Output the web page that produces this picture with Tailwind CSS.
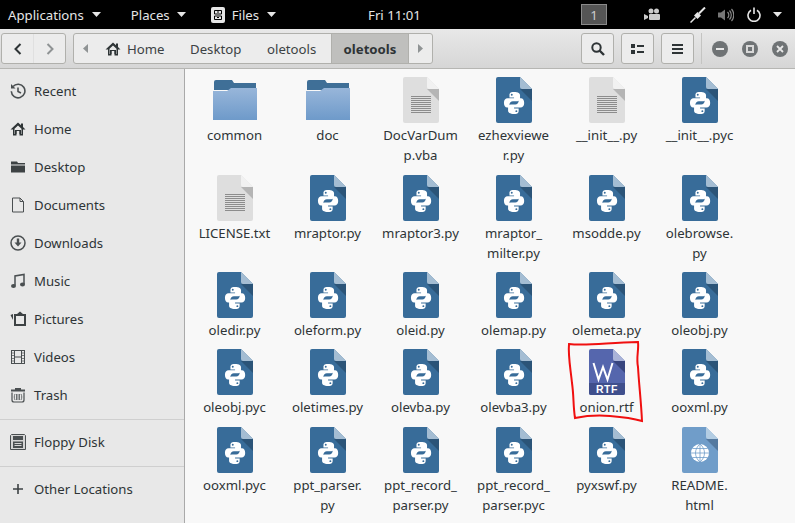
<!DOCTYPE html>
<html lang="en">
<head>
    <meta charset="UTF-8">
    <title>oletools - Files</title>
    <script src="https://cdn.jsdelivr.net/npm/@tailwindcss/browser@4"></script>
</head>
<body class="w-[795px] h-[523px] overflow-hidden bg-[#f8f8f8] text-[#2e3436] font-['Noto_Sans',sans-serif] text-[13.2px] leading-[20px]">
    <!-- shared icons -->
    <svg class="absolute w-0 h-0">
        <defs>
            <linearGradient id="folderfront" x1="0" y1="0" x2="0" y2="1"><stop offset="0" stop-color="#98b6da"/><stop offset="1" stop-color="#6e9aca"/></linearGradient>
        </defs>
        <symbol id="py" viewBox="0 0 36 46">
            <path d="M2 0H24L36 12V44a2 2 0 0 1-2 2H2a2 2 0 0 1-2-2V2A2 2 0 0 1 2 0Z" fill="#386c99"/>
            <path d="M24 0L36 12H26a2 2 0 0 1-2-2Z" fill="#a4bdd3"/>
            <path d="M24 12H36V24Z" fill="#2b5478"/>
            <g transform="translate(1.500 2) scale(.92)">
                <path d="M17.600 14c-4 0-4.600 1.700-4.600 3.500V20h5v1H11c-2.400 0-4 1.800-4 4.900 0 3.200 1.400 5.100 3.600 5.100H13v-3c0-2 1.700-3.700 3.700-3.700h4.800c1.700 0 3-1.400 3-3v-3.800c0-1.700-1.500-3.500-6.900-3.500Zm-2.100 2a1 1 0 1 1 0 2.100 1 1 0 0 1 0-2.100Z" fill="#fff"/>
                <path d="M18.400 38c4 0 4.600-1.700 4.600-3.500V32h-5v-1h7c2.400 0 4-1.800 4-4.900 0-3.200-1.400-5.100-3.600-5.100H23v3c0 2-1.700 3.700-3.700 3.700h-4.800c-1.700 0-3 1.400-3 3v3.800c0 1.700 1.500 3.500 6.900 3.500Zm2.100-2a1 1 0 1 1 0-2.100 1 1 0 0 1 0 2.100Z" fill="#fff"/>
            </g>
        </symbol>
        <symbol id="folder" viewBox="0 0 44 40">
            <path d="M1 2a2 2 0 0 1 2-2H19l2 3H43V10H1Z" fill="#3f6f97"/>
            <path d="M0 11H14l4-3H44V40H0Z" fill="url(#folderfront)"/>
        </symbol>
        <symbol id="txt" viewBox="0 0 36 46">
            <path d="M2 0H24L36 12V44a2 2 0 0 1-2 2H2a2 2 0 0 1-2-2V2A2 2 0 0 1 2 0Z" fill="#dedede"/>
            <path d="M24 0L36 12H26a2 2 0 0 1-2-2Z" fill="#f1f1f1"/>
            <path d="M24 12H36V24Z" fill="#b5b5b5"/>
            <path d="M8 19.500H28M8 21.500H28M8 23.500H28M8 25.500H28M8 27.500H28M8 29.500H28M8 31.500H28M8 33.500H28M8 35.500H28" stroke="#8c8c8c"/>
        </symbol>
        <symbol id="home" viewBox="0 0 16 16">
            <path d="M8 1.500 0.500 8.500H3V14.500H6.500V10H9.500V14.500H13V8.500H15.500L13 6V2.500H11V4.200Z" fill="#2e3436"/>
            <path d="M8 4.500 4.500 7.800V13H5V9H11V13H11.500V7.800Z" fill="#e8e8e8"/>
            <path d="M5 9H11V13H9.500V10H6.500V13H5Z" fill="#2e3436"/>
        </symbol>
        <symbol id="caret" viewBox="0 0 9 5"><path d="M0 0H9L4.500 5Z" fill="#e6e6e6"/></symbol>
    </svg>

    <!-- top bar -->
    <div class="h-[29px] bg-black text-[#e6e6e6] flex items-center relative">
        <span class="ml-[8px]">Applications</span>
        <svg class="w-[9px] h-[5px] ml-[8px]"><use href="#caret"/></svg>
        <span class="ml-[30px]">Places</span>
        <svg class="w-[9px] h-[5px] ml-[7px]"><use href="#caret"/></svg>
        <svg class="w-[14px] h-[16px] ml-[25px]" viewBox="0 0 14 16"><rect width="14" height="16" rx="2" fill="#e6e6e6"/><path d="M3.500 3.500h7v3.500h-7zM3.500 9h7v3.500h-7z" fill="none" stroke="#000"/><path d="M6 5h2M6 10.500h2" stroke="#000"/></svg>
        <span class="ml-[7px]">Files</span>
        <svg class="w-[9px] h-[5px] ml-[8px]"><use href="#caret"/></svg>
        <span class="ml-[92px] w-[56px] whitespace-nowrap">Fri 11:01</span>
        <div class="ml-[157px] w-[26px] h-[21px] bg-[#555] border border-[#8a8a8a] flex items-center justify-center text-[#ccc]">1</div>
        <svg class="w-[16px] h-[13px] ml-[37px]" viewBox="0 0 16 13"><circle cx="7" cy="3" r="2.500" fill="#ccc"/><circle cx="12.500" cy="3" r="2.500" fill="#ccc"/><rect x="5" y="6" width="11" height="6" rx="1" fill="#ccc"/><path d="M0 6l4 2v2l-4 2Z" fill="#ccc"/></svg>
        <svg class="w-[16px] h-[16px] ml-[30px]" viewBox="0 0 16 16"><path d="M0.500 15.500 5.500 10.500" stroke="#e6e6e6" stroke-width="1.500"/><path d="M4 8.500 7.500 12 11 8.500 7.500 5Z" fill="#e6e6e6"/><path d="M9 6.500 15 0.500" stroke="#e6e6e6" stroke-width="2"/></svg>
        <svg class="w-[16px] h-[14px] ml-[12px]" viewBox="0 0 16 14"><path d="M0 4.500H3L7 1.500V12.500L3 9.500H0Z" fill="#777"/><path d="M9.500 4a4 4 0 0 1 0 6M11.500 2.500a6.500 6.500 0 0 1 0 9M13.500 1a9 9 0 0 1 0 12" fill="none" stroke="#888" stroke-width="1.200"/></svg>
        <svg class="w-[14px] h-[15px] ml-[13px]" viewBox="0 0 14 15"><path d="M4 3.200a6 6 0 1 0 6 0M7 0.500V7" fill="none" stroke="#e6e6e6" stroke-width="1.600"/></svg>
        <svg class="w-[9px] h-[5px] ml-[12px]"><use href="#caret"/></svg>
    </div>

    <!-- header bar -->
    <div class="h-[40px] bg-gradient-to-b from-[#e8e8e8] to-[#d6d6d6] border-b border-[#b6b6b3] flex items-center pl-[1px]">
        <div class="w-[65px] h-[31px] rounded-[3px] border border-[#b0b0ac] bg-[#ececec] flex">
            <div class="w-[32px] flex items-center justify-center border-r border-[#e0e0e0]">
                <svg class="w-[8px] h-[12px]" viewBox="0 0 8 12"><path d="M6.500 1 1.500 6l5 5" fill="none" stroke="#2e3436" stroke-width="2"/></svg>
            </div>
            <div class="flex-1 flex items-center justify-center">
                <svg class="w-[8px] h-[12px]" viewBox="0 0 8 12"><path d="M1.500 1l5 5-5 5" fill="none" stroke="#8f9394" stroke-width="2"/></svg>
            </div>
        </div>
        <div class="ml-[7px] w-[360px] h-[31px] rounded-[3px] border border-[#b0b0ac] bg-[#ececec] flex items-center">
            <svg class="w-[5px] h-[9px] ml-[9px]" viewBox="0 0 5 9"><path d="M5 0V9L0 4.500Z" fill="#8f9394"/></svg>
            <svg class="w-[16px] h-[16px] ml-[17px]"><use href="#home"/></svg>
            <span class="ml-[6px] w-[37px] text-[#3c4244]">Home</span>
            <span class="ml-[26px] w-[52px] text-[#3c4244]">Desktop</span>
            <span class="ml-[25px] w-[51px] text-[#3c4244]">oletools</span>
            <div class="ml-[13px] h-full w-[78px] bg-[#bfbfbd] border-x border-[#b0b0ac] flex items-center justify-center font-bold">oletools</div>
            <div class="flex-1 flex items-center justify-center">
                <svg class="w-[5px] h-[9px]" viewBox="0 0 5 9"><path d="M0 0V9L5 4.500Z" fill="#8f9394"/></svg>
            </div>
        </div>
        <button class="ml-[148px] w-[33px] h-[31px] rounded-[3px] border border-[#b0b0ac] bg-[#ececec] flex items-center justify-center">
            <svg class="w-[14px] h-[14px]" viewBox="0 0 14 14"><circle cx="5.500" cy="5.500" r="4.200" fill="none" stroke="#2e3436" stroke-width="2"/><path d="M8.500 8.500 13 13" stroke="#2e3436" stroke-width="2.400"/></svg>
        </button>
        <button class="ml-[7px] w-[33px] h-[31px] rounded-[3px] border border-[#b0b0ac] bg-[#ececec] flex items-center justify-center">
            <svg class="w-[13px] h-[10px]" viewBox="0 0 13 10"><path d="M0 0h4v4H0zM0 6h4v4H0zM6 1h7v2H6zM6 7h7v2H6z" fill="#2e3436"/></svg>
        </button>
        <button class="ml-[7px] w-[33px] h-[31px] rounded-[3px] border border-[#b0b0ac] bg-[#ececec] flex items-center justify-center">
            <svg class="w-[11px] h-[10px]" viewBox="0 0 11 10"><path d="M0 0h11v2H0zM0 4h11v2H0zM0 8h11v2H0z" fill="#2e3436"/></svg>
        </button>
        <div class="ml-[7px] w-px h-[31px] bg-[#c4c4c2]"></div>
        <div class="ml-[10px] w-[16px] h-[16px] rounded-full bg-[#6f7375] flex items-center justify-center"><div class="w-[8px] h-[2px] bg-[#e8e8e8]"></div></div>
        <div class="ml-[14px] w-[16px] h-[16px] rounded-full bg-[#6f7375] flex items-center justify-center"><div class="w-[8px] h-[8px] border-2 border-[#d8d8d8]"></div></div>
        <div class="ml-[14px] w-[16px] h-[16px] rounded-full bg-[#6f7375] flex items-center justify-center">
            <svg class="w-[8px] h-[8px]" viewBox="0 0 8 8"><path d="M1 1l6 6M7 1 1 7" stroke="#e8e8e8" stroke-width="1.800"/></svg>
        </div>
    </div>

    <div class="flex h-[454px] relative">
        <!-- sidebar -->
        <div class="w-[185px] shrink-0 bg-[#e8e8e8] border-r border-[#a9a9a9] pt-[3px]">
            <div class="h-[38px] flex items-center pl-[10px] gap-[8px]">
                <svg class="w-[16px] h-[16px]" viewBox="0 0 16 16"><path d="M3 3.500a6.800 6.800 0 1 1-1.700 4.800" fill="none" stroke="#4a4f51" stroke-width="1.600"/><path d="M1 1v4.500h4.500Z" fill="#4a4f51"/><path d="M8 4.500V8.500l3 1.500" fill="none" stroke="#4a4f51" stroke-width="1.600"/></svg>
                <span>Recent</span>
            </div>
            <div class="h-[38px] flex items-center pl-[10px] gap-[8px]">
                <svg class="w-[16px] h-[16px]"><use href="#home"/></svg>
                <span>Home</span>
            </div>
            <div class="h-[38px] flex items-center pl-[10px] gap-[8px]">
                <svg class="w-[16px] h-[16px]" viewBox="0 0 16 16"><path d="M1 2.500H7L8 4H15V5.500H1ZM1 6.500H15V13.500H1Z" fill="#3d4244"/></svg>
                <span>Desktop</span>
            </div>
            <div class="h-[38px] flex items-center pl-[10px] gap-[8px]">
                <svg class="w-[16px] h-[16px]" viewBox="0 0 16 16"><path d="M2.500 1H10L13.500 4.500V15H2.500ZM10 1V4.500H13.500" fill="none" stroke="#4a4f51"/></svg>
                <span>Documents</span>
            </div>
            <div class="h-[38px] flex items-center pl-[10px] gap-[8px]">
                <svg class="w-[16px] h-[16px]" viewBox="0 0 16 16"><circle cx="8" cy="8" r="7" fill="none" stroke="#4a4f51" stroke-width="1.500"/><path d="M6.800 3.500H9.200V7.500H11.500L8 11.500 4.500 7.500H6.800Z" fill="#4a4f51"/></svg>
                <span>Downloads</span>
            </div>
            <div class="h-[38px] flex items-center pl-[10px] gap-[8px]">
                <svg class="w-[16px] h-[16px]" viewBox="0 0 16 16"><path d="M5 12.500V3L14 1.500V11" fill="none" stroke="#4a4f51" stroke-width="1.500"/><ellipse cx="3.500" cy="13" rx="2.500" ry="2" fill="#4a4f51"/><ellipse cx="12.500" cy="11.500" rx="2.500" ry="2" fill="#4a4f51"/></svg>
                <span>Music</span>
            </div>
            <div class="h-[38px] flex items-center pl-[10px] gap-[8px]">
                <svg class="w-[16px] h-[16px]" viewBox="0 0 16 16"><rect x="5" y="4" width="10" height="10" fill="none" stroke="#3d4244" stroke-width="2"/><path d="M7 3 10 0.500 13 3ZM3 3V9L0.500 4Z" fill="#3d4244"/></svg>
                <span>Pictures</span>
            </div>
            <div class="h-[38px] flex items-center pl-[10px] gap-[8px]">
                <svg class="w-[16px] h-[16px]" viewBox="0 0 16 16"><rect x="1.500" y="1.500" width="13" height="13" fill="none" stroke="#4a4f51"/><path d="M4.500 1.500V14.500M11.500 1.500V14.500M4.500 8H11.500" fill="none" stroke="#4a4f51"/><path d="M1.500 4h3M1.500 6.500h3M1.500 9.500h3M1.500 12h3M11.500 4h3M11.500 6.500h3M11.500 9.500h3M11.500 12h3" stroke="#4a4f51" stroke-width="0.700"/></svg>
                <span>Videos</span>
            </div>
            <div class="h-[38px] flex items-center pl-[10px] gap-[8px]">
                <svg class="w-[16px] h-[16px]" viewBox="0 0 16 16"><path d="M5 2.500V1H11V2.500H15V4.500H1V2.500Z" fill="#4a4f51"/><path d="M2 5.500V13a2 2 0 0 0 2 2H12a2 2 0 0 0 2-2V5.500" fill="none" stroke="#4a4f51" stroke-width="1.200"/><path d="M5 7c-1 2-1 4 0 6M8 7v6M11 7c1 2 1 4 0 6M6.500 7v6M9.500 7v6" fill="none" stroke="#4a4f51" stroke-width="0.800"/></svg>
                <span>Trash</span>
            </div>
            <div class="mt-[5px] border-t border-[#cfcfcf] pt-[4px]">
                <div class="h-[36px] flex items-center pl-[10px] gap-[8px]">
                    <svg class="w-[16px] h-[16px]" viewBox="0 0 16 16"><path d="M1.500 0.500H14.500L15.500 1.500V15.500H0.500V1.500Z" fill="#d5d5d5" stroke="#4a4f51"/><rect x="3" y="2" width="10" height="4" fill="#4a4f51"/><rect x="3" y="7.500" width="10" height="6.500" fill="#4a4f51"/><path d="M4.500 9.500h7M4.500 11.500h7" stroke="#d5d5d5"/></svg>
                    <span>Floppy Disk</span>
                </div>
            </div>
            <div class="mt-[6px] border-t border-[#cfcfcf] pt-[3px]">
                <div class="h-[38px] flex items-center pl-[10px] gap-[8px]">
                    <svg class="w-[16px] h-[16px]" viewBox="0 0 16 16"><path d="M3 8h10M8 3v10" stroke="#3d4244" stroke-width="1.600"/></svg>
                    <span>Other Locations</span>
                </div>
            </div>
        </div>

        <!-- file grid -->
        <div class="flex-1 pl-[3px] pt-[8px] grid grid-cols-[repeat(6,93px)] content-start text-center text-[#2e3436]">
            <!-- row 1 -->
            <div class="h-[98px] flex flex-col items-center"><svg class="w-[44px] h-[40px] mt-[3px]"><use href="#folder"/></svg><span class="mt-[5px]">common</span></div>
            <div class="h-[98px] flex flex-col items-center"><svg class="w-[44px] h-[40px] mt-[3px]"><use href="#folder"/></svg><span class="mt-[5px]">doc</span></div>
            <div class="h-[98px] flex flex-col items-center"><svg class="w-[36px] h-[46px]"><use href="#txt"/></svg><span class="mt-[2px]">DocVarDum<br>p.vba</span></div>
            <div class="h-[98px] flex flex-col items-center"><svg class="w-[36px] h-[46px]"><use href="#py"/></svg><span class="mt-[2px]">ezhexviewe<br>r.py</span></div>
            <div class="h-[98px] flex flex-col items-center"><svg class="w-[36px] h-[46px]"><use href="#txt"/></svg><span class="mt-[2px]">__init__.py</span></div>
            <div class="h-[98px] flex flex-col items-center"><svg class="w-[36px] h-[46px]"><use href="#py"/></svg><span class="mt-[2px]">__init__.pyc</span></div>
            <!-- row 2 -->
            <div class="h-[97px] flex flex-col items-center"><svg class="w-[36px] h-[46px]"><use href="#txt"/></svg><span class="mt-[2px]">LICENSE.txt</span></div>
            <div class="h-[97px] flex flex-col items-center"><svg class="w-[36px] h-[46px]"><use href="#py"/></svg><span class="mt-[2px]">mraptor.py</span></div>
            <div class="h-[97px] flex flex-col items-center"><svg class="w-[36px] h-[46px]"><use href="#py"/></svg><span class="mt-[2px]">mraptor3.py</span></div>
            <div class="h-[97px] flex flex-col items-center"><svg class="w-[36px] h-[46px]"><use href="#py"/></svg><span class="mt-[2px]">mraptor_<br>milter.py</span></div>
            <div class="h-[97px] flex flex-col items-center"><svg class="w-[36px] h-[46px]"><use href="#py"/></svg><span class="mt-[2px]">msodde.py</span></div>
            <div class="h-[97px] flex flex-col items-center"><svg class="w-[36px] h-[46px]"><use href="#py"/></svg><span class="mt-[2px]">olebrowse.<br>py</span></div>
            <!-- row 3 -->
            <div class="h-[77px] flex flex-col items-center"><svg class="w-[36px] h-[46px]"><use href="#py"/></svg><span class="mt-[2px]">oledir.py</span></div>
            <div class="h-[77px] flex flex-col items-center"><svg class="w-[36px] h-[46px]"><use href="#py"/></svg><span class="mt-[2px]">oleform.py</span></div>
            <div class="h-[77px] flex flex-col items-center"><svg class="w-[36px] h-[46px]"><use href="#py"/></svg><span class="mt-[2px]">oleid.py</span></div>
            <div class="h-[77px] flex flex-col items-center"><svg class="w-[36px] h-[46px]"><use href="#py"/></svg><span class="mt-[2px]">olemap.py</span></div>
            <div class="h-[77px] flex flex-col items-center"><svg class="w-[36px] h-[46px]"><use href="#py"/></svg><span class="mt-[2px]">olemeta.py</span></div>
            <div class="h-[77px] flex flex-col items-center"><svg class="w-[36px] h-[46px]"><use href="#py"/></svg><span class="mt-[2px]">oleobj.py</span></div>
            <!-- row 4 -->
            <div class="h-[78px] flex flex-col items-center"><svg class="w-[36px] h-[46px]"><use href="#py"/></svg><span class="mt-[2px]">oleobj.pyc</span></div>
            <div class="h-[78px] flex flex-col items-center"><svg class="w-[36px] h-[46px]"><use href="#py"/></svg><span class="mt-[2px]">oletimes.py</span></div>
            <div class="h-[78px] flex flex-col items-center"><svg class="w-[36px] h-[46px]"><use href="#py"/></svg><span class="mt-[2px]">olevba.py</span></div>
            <div class="h-[78px] flex flex-col items-center"><svg class="w-[36px] h-[46px]"><use href="#py"/></svg><span class="mt-[2px]">olevba3.py</span></div>
            <div class="h-[78px] flex flex-col items-center">
                <svg class="w-[36px] h-[46px]" viewBox="0 0 36 46">
                    <path d="M2 0H24L36 12V44a2 2 0 0 1-2 2H2a2 2 0 0 1-2-2V2A2 2 0 0 1 2 0Z" fill="#5566ad"/>
                    <path d="M0 34H36V44a2 2 0 0 1-2 2H2a2 2 0 0 1-2-2Z" fill="#3f4f8c"/>
                    <path d="M24 0L36 12H26a2 2 0 0 1-2-2Z" fill="#a9b3d8"/>
                    <path d="M24 12H36V24Z" fill="#37457e"/>
                    <path d="M4.500 14 9.500 30.500 14 18 18.500 30.500 23.500 14" fill="none" stroke="#fff" stroke-width="2"/>
                    <text x="18" y="44" text-anchor="middle" font-family="Liberation Sans" font-weight="700" font-size="10.500" letter-spacing="0.500" fill="#fff">RTF</text>
                </svg>
                <span class="mt-[2px]">onion.rtf</span>
            </div>
            <div class="h-[78px] flex flex-col items-center"><svg class="w-[36px] h-[46px]"><use href="#py"/></svg><span class="mt-[2px]">ooxml.py</span></div>
            <!-- row 5 -->
            <div class="flex flex-col items-center"><svg class="w-[36px] h-[46px]"><use href="#py"/></svg><span class="mt-[2px]">ooxml.pyc</span></div>
            <div class="flex flex-col items-center"><svg class="w-[36px] h-[46px]"><use href="#py"/></svg><span class="mt-[2px]">ppt_parser.<br>py</span></div>
            <div class="flex flex-col items-center"><svg class="w-[36px] h-[46px]"><use href="#py"/></svg><span class="mt-[2px]">ppt_record_<br>parser.py</span></div>
            <div class="flex flex-col items-center"><svg class="w-[36px] h-[46px]"><use href="#py"/></svg><span class="mt-[2px]">ppt_record_<br>parser.pyc</span></div>
            <div class="flex flex-col items-center"><svg class="w-[36px] h-[46px]"><use href="#py"/></svg><span class="mt-[2px]">pyxswf.py</span></div>
            <div class="flex flex-col items-center">
                <svg class="w-[36px] h-[46px]" viewBox="0 0 36 46">
                    <path d="M2 0H24L36 12V44a2 2 0 0 1-2 2H2a2 2 0 0 1-2-2V2A2 2 0 0 1 2 0Z" fill="#709dc9"/>
                    <path d="M24 0L36 12H26a2 2 0 0 1-2-2Z" fill="#b3cde3"/>
                    <path d="M24 12H36V24Z" fill="#54799f"/>
                    <circle cx="18" cy="26" r="9" fill="#fff"/>
                    <path d="M9 26H27M10.500 21.500H25.500M10.500 30.500H25.500M18 17V35M18 17c-6 5-6 13 0 18M18 17c6 5 6 13 0 18" fill="none" stroke="#709dc9" stroke-width="0.800"/>
                </svg>
                <span class="mt-[2px]">README.<br>html</span>
            </div>
        </div>

        <!-- red annotation around onion.rtf -->
        <svg class="absolute left-[560px] top-[266px] w-[90px] h-[90px]" viewBox="0 0 90 90">
            <path d="M9 9C25 11 45 8 78 7 79 15 76 22 78 32 79 50 81 65 82 86 75 84 62 82 50 81 38 80 25 81 15 83 13 70 14 62 12 48 10 30 8 20 9 9Z" fill="none" stroke="#f01010" stroke-width="2"/>
        </svg>
    </div>
</body>
</html>
